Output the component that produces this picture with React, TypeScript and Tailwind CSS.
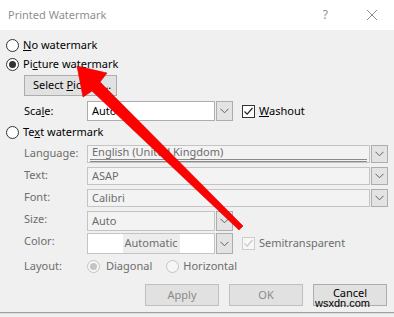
import React from "react";

const Radio = ({ checked, disabled }: { checked?: boolean; disabled?: boolean }) => (
  <span
    className={`flex h-[13px] w-[13px] shrink-0 items-center justify-center rounded-full border ${
      disabled ? "border-[#c4c4c4] bg-[#f6f6f6]" : "border-[#333] bg-white"
    }`}
  >
    {checked && (
      <span className={`h-[7px] w-[7px] rounded-full ${disabled ? "bg-[#c4c4c4]" : "bg-[#333]"}`} />
    )}
  </span>
);

const Check = ({ disabled }: { disabled?: boolean }) => (
  <span
    className={`flex h-[13px] w-[13px] shrink-0 items-center justify-center border ${
      disabled ? "border-[#cccccc] bg-[#f7f7f7]" : "border-[#333] bg-white"
    }`}
  >
    <svg width="11" height="11" viewBox="0 0 11 11">
      <path d="M1.5 5.5 L4.2 8.2 L9.5 2" fill="none" stroke={disabled ? "#c8c8c8" : "#222"} strokeWidth="1.2" />
    </svg>
  </span>
);

const Chevron = () => (
  <svg width="9" height="6" viewBox="0 0 9 6">
    <path d="M0.5 0.8 L4.5 4.8 L8.5 0.8" fill="none" stroke="#606060" strokeWidth="1" />
  </svg>
);

const DropButton = () => (
  <span className="ml-[1px] flex w-[17px] shrink-0 items-center justify-center border border-[#adadad] bg-[#e3e3e3]">
    <Chevron />
  </span>
);

const Label = ({ children }: { children: React.ReactNode }) => (
  <span className="w-[63px] shrink-0 text-[#6d6d6d]">{children}</span>
);

export default function App() {
  return (
    <div
      className="relative h-[317px] w-[394px] overflow-hidden bg-[#f0f0f0] text-[11px] text-black"
      style={{ fontFamily: '"Noto Sans", sans-serif' }}
    >
      <div className="flex h-[30px] items-center bg-white pl-[8px] text-[#8f8f8f]">
        <span className="text-[11px]">Printed Watermark</span>
        <span className="ml-auto mr-[38px] text-[12px] text-[#8f8f8f]">?</span>
        <svg width="12" height="12" viewBox="0 0 12 12" className="mr-[16px]">
          <path d="M1 1 L11 11 M11 1 L1 11" stroke="#8f8f8f" strokeWidth="1" />
        </svg>
      </div>

      <div className="flex flex-col pt-[6px]">
        <div className="flex h-[18px] items-center gap-[4px] pl-[6px]">
          <Radio />
          <span>
            <u>N</u>o watermark
          </span>
        </div>
        <div className="mt-[1px] flex h-[18px] items-center gap-[4px] pl-[6px]">
          <Radio checked />
          <span>
            Pi<u>c</u>ture watermark
          </span>
        </div>
        <div className="mt-[2px] pl-[24px]">
          <div className="flex h-[21px] w-[93px] items-center border border-[#adadad] bg-[#e1e1e1] pl-[8px]">
            <span>
              Select <u>P</u>icture...
            </span>
          </div>
        </div>
        <div className="mt-[5px] flex h-[20px] items-center pl-[24px]">
          <span className="w-[63px] shrink-0">
            Sca<u>l</u>e:
          </span>
          <div className="flex h-full w-[146px]">
            <span className="flex flex-1 items-center border border-[#adadad] bg-white pl-[4px]">Auto</span>
            <DropButton />
          </div>
          <span className="ml-[9px] flex items-center gap-[4px]">
            <Check />
            <span>
              <u>W</u>ashout
            </span>
          </span>
        </div>
        <div className="mt-[2px] flex h-[18px] items-center gap-[4px] pl-[6px]">
          <Radio />
          <span>
            Te<u>x</u>t watermark
          </span>
        </div>

        <div className="mt-[4px] flex h-[18px] items-stretch pl-[24px]">
          <Label>Language:</Label>
          <div className="flex w-[301px]">
            <span className="flex flex-1 items-center border border-[#c4c4c4] bg-[#f3f3f3] px-[2px] text-[#6d6d6d]">
              <span className="flex h-full w-full items-center border-b-[3px] border-double border-[#8a8a8a] pl-[2px]">
                English (United Kingdom)
              </span>
            </span>
            <DropButton />
          </div>
        </div>
        <div className="mt-[4px] flex h-[18px] items-stretch pl-[24px]">
          <Label>Text:</Label>
          <div className="flex w-[301px]">
            <span className="flex flex-1 items-center border border-[#c4c4c4] bg-[#f3f3f3] pl-[4px] text-[#6d6d6d]">
              ASAP
            </span>
            <DropButton />
          </div>
        </div>
        <div className="mt-[4px] flex h-[18px] items-stretch pl-[24px]">
          <Label>Font:</Label>
          <div className="flex w-[301px]">
            <span className="flex flex-1 items-center border border-[#c4c4c4] bg-[#f3f3f3] pl-[4px] text-[#6d6d6d]">
              Calibri
            </span>
            <DropButton />
          </div>
        </div>
        <div className="mt-[4px] flex h-[20px] items-stretch pl-[24px]">
          <Label>Size:</Label>
          <div className="flex w-[146px]">
            <span className="flex flex-1 items-center border border-[#c4c4c4] bg-[#f3f3f3] pl-[4px] text-[#6d6d6d]">
              Auto
            </span>
            <DropButton />
          </div>
        </div>
        <div className="mt-[2px] flex h-[21px] items-stretch pl-[24px]">
          <Label>Color:</Label>
          <div className="flex w-[146px]">
            <span className="flex flex-1 items-center justify-center border border-[#c4c4c4] bg-white text-[#6d6d6d]">
              <span className="flex h-full items-center bg-[#ededed] px-[2px]">Automatic</span>
            </span>
            <DropButton />
          </div>
          <span className="ml-[9px] flex items-center gap-[4px] text-[#6d6d6d]">
            <Check disabled />
            <span>Semitransparent</span>
          </span>
        </div>
        <div className="mt-[3px] flex h-[18px] items-center pl-[24px] text-[#6d6d6d]">
          <span className="w-[63px] shrink-0">Layout:</span>
          <span className="flex items-center gap-[6px]">
            <Radio checked disabled />
            <span>Diagonal</span>
          </span>
          <span className="ml-[14px] flex items-center gap-[4px]">
            <Radio disabled />
            <span>Horizontal</span>
          </span>
        </div>

        <div className="mt-[9px] flex h-[22px] justify-end gap-[10px] pr-[7px]">
          <span className="flex w-[74px] items-center justify-center border border-[#bfbfbf] bg-[#e1e1e1] text-[#8a8a8a]">
            Apply
          </span>
          <span className="flex w-[74px] items-center justify-center border border-[#bfbfbf] bg-[#e1e1e1] text-[#8a8a8a]">
            OK
          </span>
          <span className="relative flex w-[74px] justify-center border border-[#adadad] bg-[#e1e1e1] text-black">
            <span className="mt-[1px] leading-[14px]">Cancel</span>
            <span
              className="absolute left-[1px] top-[13px] text-[11px] leading-[10px] text-black"
              style={{ fontFamily: '"Liberation Sans", sans-serif' }}
            >
              wsxdn.com
            </span>
          </span>
        </div>
        <div className="mt-[6px] h-[2px] border-t border-[#a0a0a0] bg-[#dcdcdc]" />
      </div>

      <svg className="pointer-events-none absolute left-0 top-0" width="394" height="317" viewBox="0 0 394 317">
        <polygon
          points="77,66 107,73 100,82 243,226 239,230 92,91 83,97"
          fill="#ff0000"
          stroke="#d40000"
          strokeWidth="0.6"
        />
      </svg>
    </div>
  );
}
